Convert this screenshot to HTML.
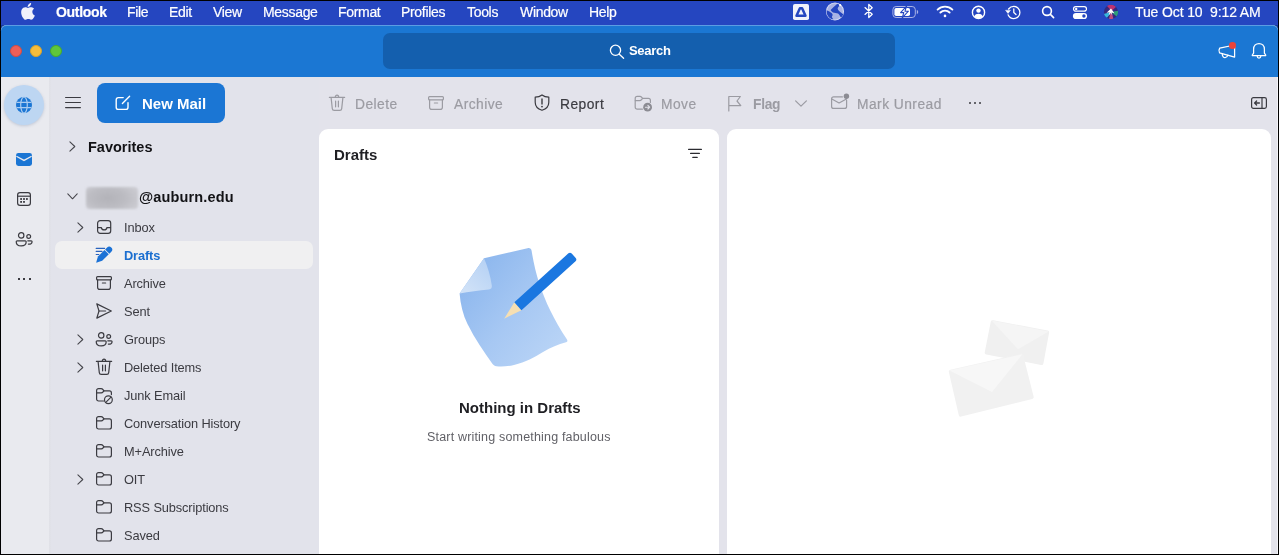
<!DOCTYPE html>
<html>
<head>
<meta charset="utf-8">
<style>
*{box-sizing:border-box;margin:0;padding:0}
html,body{width:1279px;height:555px;overflow:hidden;background:#000}
body{font-family:"Liberation Sans",sans-serif;position:relative}
.abs{position:absolute}
svg{position:absolute;overflow:visible}
#menubar{left:1px;top:1px;width:1277px;height:32px;background:#2546c0;border-bottom:8px solid #143a98}
.mi{position:absolute;top:1px;height:23px;line-height:23px;color:#fff;font-size:14px;letter-spacing:-0.32px;white-space:nowrap;-webkit-text-stroke:0.2px #fff;will-change:transform}
#win{left:1px;top:25px;width:1277px;height:529px;background:#e3e3eb;border-radius:5.5px 5.5px 0 0}
#title{left:1px;top:25px;width:1277px;height:52px;background:#1b77d3;border-radius:5.5px 5.5px 0 0;border-top:1px solid #5b9de3}
#search{left:383px;top:33px;width:512px;height:36px;background:#145fae;border-radius:7px}
#rail{left:1px;top:77px;width:48px;height:477px;background:#e9eaef}
#side{left:49px;top:77px;width:270px;height:477px;background:#e2e3eb}
#list{left:319px;top:129px;width:400px;height:425px;background:#fff;border-radius:9px 9px 0 0}
#read{left:727px;top:129px;width:544px;height:425px;background:#fff;border-radius:9px 9px 0 0}
.ft{position:absolute;left:124px;line-height:20px;font-size:12.8px;letter-spacing:-0.12px;color:#3b3b41;white-space:nowrap;will-change:transform}
.tb{position:absolute;top:95px;margin-left:-1px;font-size:13.8px;letter-spacing:0.46px;line-height:20px;white-space:nowrap;color:#9b9ba2;-webkit-text-stroke:0.2px;will-change:transform}
.t{position:absolute;white-space:nowrap;will-change:transform}
</style>
</head>
<body>
<!-- MENUBAR -->
<div id="menubar" class="abs"></div>
<span class="mi" id="m_outlook" style="left:56px;font-weight:bold">Outlook</span>
<span class="mi" id="m_file" style="left:127px">File</span>
<span class="mi" id="m_edit" style="left:169px">Edit</span>
<span class="mi" id="m_view" style="left:213px">View</span>
<span class="mi" id="m_message" style="left:263px">Message</span>
<span class="mi" id="m_format" style="left:338px">Format</span>
<span class="mi" id="m_profiles" style="left:401px">Profiles</span>
<span class="mi" id="m_tools" style="left:467px">Tools</span>
<span class="mi" id="m_window" style="left:520px">Window</span>
<span class="mi" id="m_help" style="left:589px">Help</span>
<span class="mi" id="m_date" style="left:1135px;letter-spacing:-0.12px">Tue Oct 10&nbsp; 9:12 AM</span>
<!-- MENUBAR-ICONS -->
<svg style="left:20.6px;top:3px" width="14" height="17" viewBox="0 0 14 17"><path fill="#f0f1fb" d="M11.3 9.0 C11.3 6.9 13.0 5.9 13.1 5.8 C12.1 4.4 10.6 4.2 10.1 4.2 C8.8 4.1 7.6 4.9 7.0 4.9 C6.3 4.9 5.3 4.2 4.3 4.2 C2.9 4.2 1.6 5.0 0.9 6.2 C-0.6 8.8 0.5 12.6 2.0 14.7 C2.7 15.7 3.5 16.8 4.6 16.8 C5.7 16.8 6.1 16.1 7.4 16.1 C8.7 16.1 9.0 16.8 10.1 16.8 C11.3 16.8 12.0 15.8 12.7 14.8 C13.5 13.6 13.8 12.5 13.8 12.4 C13.8 12.4 11.3 11.5 11.3 9.0 Z M9.2 2.8 C9.8 2.1 10.2 1.1 10.1 0.1 C9.2 0.1 8.2 0.7 7.6 1.4 C7.0 2.0 6.5 3.0 6.7 4.0 C7.6 4.1 8.6 3.5 9.2 2.8 Z"/></svg>
<svg style="left:793px;top:4px" width="16" height="16" viewBox="0 0 16 16"><rect width="16" height="16" rx="1.8" fill="#f1f2fb"/><path d="M6.9 4.3 H9.1 L12.5 11.7 H3.5 Z" fill="none" stroke="#2546c0" stroke-width="2.5" stroke-linejoin="round"/></svg>
<svg style="left:825px;top:2px" width="20" height="19" viewBox="0 0 20 19"><circle cx="10" cy="9.45" r="8.5" fill="#a9b3e4" stroke="#d3d8f3" stroke-width="1.1"/><path d="M12.8 1.8 L15.0 3.4 C13.4 4.6 12.6 5.6 12.7 6.6 C12.8 8.2 14.6 9.8 16.2 10.8 L18.3 12.2 C17.8 13.6 17.0 14.6 15.8 15.6 C15.0 13.8 14.2 12.4 13.0 11.6 C11.6 10.8 9.6 11.0 8.0 10.4 C6.8 9.8 6.0 9.0 5.6 8.0 C7.6 6.0 9.8 3.8 11.4 2.4 Z" fill="#2546c0"/><path d="M1.6 8.2 C2.8 8.6 3.8 9.0 4.8 9.8 C6.0 10.8 7.4 11.4 7.6 12.4 C7.8 13.4 6.8 14.2 7.0 15.2 C7.2 16.0 8.0 16.6 8.6 17.6 C4.8 17.0 1.6 13.6 1.6 9.45 Z" fill="#2546c0"/><circle cx="15.1" cy="3.1" r="1.05" fill="#fff"/></svg>
<svg style="left:864px;top:3px" width="10" height="16" viewBox="0 0 10 16" fill="none" stroke="#fff" stroke-width="1.3" stroke-linejoin="round" stroke-linecap="round"><path d="M1.0 4.6 L8.2 11.2 L4.8 14.6 V1.4 L8.2 4.8 L1.0 11.4"/></svg>
<svg style="left:892px;top:6px" width="28" height="12" viewBox="0 0 28 12"><rect x="0.9" y="0.5" width="22.4" height="11" rx="3.2" fill="none" stroke="#aab3e6" stroke-width="1"/><rect x="2.4" y="2" width="15.6" height="8" rx="1.8" fill="#fff"/><path d="M24.8 4.0 C25.8 4.4 26.2 5.2 26.2 6.0 C26.2 6.8 25.8 7.6 24.8 8.0 Z" fill="#aab3e6"/><path d="M14.6 0.2 L8.6 6.6 H11.8 L10.2 11.8 L16.4 5.2 H13.0 Z" fill="#fff" stroke="#2546c0" stroke-width="1.1" stroke-linejoin="round"/></svg>
<svg style="left:936px;top:5px" width="18" height="13" viewBox="0 0 18 13" fill="none" stroke="#fff" stroke-width="1.9" stroke-linecap="round"><path d="M1.6 4.6 C5.8 0.6 12.2 0.6 16.4 4.6"/><path d="M4.4 7.5 C7.0 5.0 11.0 5.0 13.6 7.5"/><path d="M9 10.9 L9 10.9" stroke-width="2.6"/></svg>
<svg style="left:971px;top:5px" width="15" height="15" viewBox="0 0 15 15"><circle cx="7.5" cy="7.4" r="6.1" fill="none" stroke="#fff" stroke-width="1.4"/><circle cx="7.5" cy="5.6" r="2.2" fill="#fff"/><path d="M3.2 11.6 C4.0 9.4 5.6 8.8 7.5 8.8 C9.4 8.8 11.0 9.4 11.8 11.6 C10.6 12.8 9.2 13.4 7.5 13.4 C5.8 13.4 4.4 12.8 3.2 11.6 Z" fill="#fff"/></svg>
<svg style="left:1005px;top:5px" width="16" height="15" viewBox="0 0 16 15" fill="none" stroke="#fff" stroke-width="1.3" stroke-linecap="round" stroke-linejoin="round"><path d="M3.6 4.0 C4.8 2.4 6.6 1.4 8.8 1.4 C12.2 1.4 14.9 4.1 14.9 7.5 C14.9 10.9 12.2 13.6 8.8 13.6 C6.2 13.6 4.0 12.0 3.1 9.8"/><path d="M0.8 5.6 L3.0 8.4 L5.2 5.6 Z" fill="#fff" stroke-width="0.6"/><path d="M8.8 4.0 V7.6 L11.0 9.6"/></svg>
<svg style="left:1041px;top:5px" width="14" height="14" viewBox="0 0 14 14" fill="none" stroke="#fff" stroke-width="1.6" stroke-linecap="round"><circle cx="6.0" cy="6.0" r="4.4"/><path d="M9.4 9.4 L12.6 12.6"/></svg>
<svg style="left:1072px;top:5px" width="16" height="15" viewBox="0 0 16 15"><rect x="1.5" y="1.6" width="13" height="4.6" rx="2.3" fill="none" stroke="#fff" stroke-width="1.2"/><circle cx="4.2" cy="3.9" r="1.2" fill="#fff"/><rect x="0.9" y="7.9" width="14.2" height="6.2" rx="3.1" fill="#fff"/><circle cx="11.9" cy="11" r="1.7" fill="#2546c0"/></svg>
<svg style="left:1103px;top:3.7px" width="16" height="16" viewBox="0 0 16 16"><defs><radialGradient id="sg" cx="0.5" cy="0.5" r="0.5"><stop offset="0" stop-color="#3a2c8c"/><stop offset="0.8" stop-color="#34287c"/><stop offset="1" stop-color="#2b2d86"/></radialGradient><clipPath id="sc"><circle cx="8" cy="8" r="7.2"/></clipPath></defs><circle cx="8" cy="8" r="7.2" fill="url(#sg)"/><g clip-path="url(#sc)"><g style="filter:blur(0.7px)"><path d="M3 1 C6 0 11 0 13.5 2.5 C12 4 10 5.5 8.2 7.2 C7 5 5 3 3 1 Z" fill="#d3346f" opacity="0.85"/><path d="M0.5 10 C3 9.5 6 8.8 8 8 C6.5 10.5 5 12.8 3.4 14.6 C2 13.6 1 12 0.5 10 Z" fill="#36c7e8" opacity="0.9"/><path d="M15.6 6.5 C15.8 9 15 11 13.6 12.6 C12 11 10 9.4 8.2 8 C10.6 7.6 13.4 7 15.6 6.5 Z" fill="#2db37a" opacity="0.85"/><path d="M8 7.8 C9 10 10 12.6 10.6 15.4 C9 15.8 7.4 15.6 6 15 C6.6 12.4 7.2 10 8 7.8 Z" fill="#e2557f" opacity="0.8"/></g><path d="M8 4.6 L11.4 9.2 L8.6 8.6 L9.4 11.6 L7.8 9 L5.6 11.4 L6.6 8.2 L3.6 8.8 Z" fill="#fff"/></g></svg>
<!-- WINDOW -->
<div id="win" class="abs"></div>
<div id="title" class="abs"></div>
<div id="search" class="abs"></div>
<!-- TITLE-ITEMS -->
<div class="abs" style="left:10px;top:45px;width:12px;height:12px;border-radius:50%;background:#ed5f57;border:0.5px solid #d44a42"></div>
<div class="abs" style="left:30px;top:45px;width:12px;height:12px;border-radius:50%;background:#f6bd3b;border:0.5px solid #dba32b"></div>
<div class="abs" style="left:50px;top:45px;width:12px;height:12px;border-radius:50%;background:#5fc63b;border:0.5px solid #48a92c"></div>
<svg style="left:609px;top:43px" width="16" height="16" viewBox="0 0 16 16" fill="none" stroke="#fff" stroke-width="1.3" stroke-linecap="round"><circle cx="6.5" cy="7.3" r="5.1"/><path d="M10.3 11.2 L14.6 15.2"/></svg>
<span class="t" id="t_search" style="left:629px;top:41px;line-height:20px;font-size:13px;letter-spacing:-0.3px;font-weight:bold;color:#fff">Search</span>
<svg style="left:1217px;top:42px" width="20" height="18" viewBox="0 0 20 18" fill="none" stroke="#fff" stroke-width="1.25" stroke-linejoin="round" stroke-linecap="round"><path d="M2.7 6.2 L17.6 3.0 V15.1 L2.5 10.8 C1.7 9.4 1.8 7.6 2.7 6.2 Z"/><path d="M5.2 11.8 C5.3 14.6 6.8 15.8 8.1 15.7 C9.4 15.6 10.4 14.7 10.8 13.1"/></svg>
<div class="abs" style="left:1229.1px;top:42.4px;width:6.6px;height:6.6px;border-radius:50%;background:#ea443a"></div>
<svg style="left:1250px;top:41.5px" width="18" height="18" viewBox="0 0 18 18" fill="none" stroke="#fff" stroke-width="1.25" stroke-linejoin="round" stroke-linecap="round"><path d="M3.6 11.2 V7.2 C3.6 3.7 6.0 1.5 9.0 1.5 C12.0 1.5 14.4 3.7 14.4 7.2 V11.2 L15.7 13.0 C15.9 13.4 15.7 13.7 15.3 13.7 H2.7 C2.3 13.7 2.1 13.4 2.3 13.0 Z"/><path d="M7.2 14.2 C7.4 16.6 10.6 16.6 10.8 14.2"/></svg>
<div id="rail" class="abs"></div>
<div id="side" class="abs"></div>
<div id="list" class="abs"></div>
<div id="read" class="abs"></div>
<!-- RAIL-ITEMS -->
<div class="abs" style="left:1277px;top:77px;width:1px;height:477px;background:#f3f3f7"></div>
<div class="abs" style="left:49px;top:77px;width:2px;height:477px;background:linear-gradient(90deg,#e0e1e7,#e1e2e9)"></div>
<div class="abs" style="left:4px;top:85px;width:40px;height:40px;border-radius:50%;background:#bdd6f2;box-shadow:0 1px 3px rgba(90,110,150,0.28)"></div>
<svg style="left:16px;top:97px" width="16" height="16" viewBox="0 0 16 16"><circle cx="8" cy="8" r="8" fill="#1b76d4"/><g fill="none" stroke="#a9cbf0" stroke-width="1.2"><ellipse cx="8" cy="8" rx="3.3" ry="8"/><path d="M0.5 5.3 H15.5 M0.5 10.7 H15.5"/></g></svg>
<svg style="left:16px;top:153px" width="16" height="13" viewBox="0 0 16 13"><rect x="0" y="0" width="16" height="13" rx="2.4" fill="#1b76d4"/><path d="M0.4 3.2 L8 7.4 L15.6 3.2" fill="none" stroke="#e9eaef" stroke-width="1.3"/></svg>
<svg style="left:17px;top:192px" width="14" height="14" viewBox="0 0 14 14" fill="none" stroke="#3b3b41" stroke-width="1.2"><rect x="0.6" y="0.6" width="12.8" height="12.8" rx="2.4"/><path d="M0.6 4.2 H13.4"/><g fill="#3b3b41" stroke="none"><rect x="3.2" y="6.1" width="1.8" height="1.8"/><rect x="6.1" y="6.1" width="1.8" height="1.8"/><rect x="9.0" y="6.1" width="1.8" height="1.8"/><rect x="3.2" y="9.0" width="1.8" height="1.8"/><rect x="6.1" y="9.0" width="1.8" height="1.8"/></g></svg>
<svg style="left:15px;top:232px" width="18" height="15" viewBox="0 0 18 15" fill="none" stroke="#3b3b41" stroke-width="1.2" stroke-linecap="round"><circle cx="6.2" cy="3.4" r="2.7"/><path d="M2.2 8.8 H10.2 C10.8 8.8 11.2 9.2 11.2 9.8 C11.2 12.6 9.0 13.9 6.2 13.9 C3.4 13.9 1.2 12.6 1.2 9.8 C1.2 9.2 1.6 8.8 2.2 8.8 Z"/><circle cx="13.7" cy="4.5" r="1.9"/><path d="M12.8 8.8 H16.2 C16.8 8.8 17.1 9.2 17.1 9.8 C17.0 11.6 15.6 12.3 13.4 12.1"/></svg>
<div class="abs" style="left:17.5px;top:278px;width:2.2px;height:2.2px;background:#3b3b41"></div>
<div class="abs" style="left:23px;top:278px;width:2.2px;height:2.2px;background:#3b3b41"></div>
<div class="abs" style="left:28.5px;top:278px;width:2.2px;height:2.2px;background:#3b3b41"></div>
<!-- TOOLBAR-ITEMS -->
<svg style="left:65px;top:96px" width="16" height="13" viewBox="0 0 16 13" stroke="#3b3b41" stroke-width="1.2" stroke-linecap="round"><path d="M0.6 1.5 H15.4 M0.6 6.5 H15.4 M0.6 11.6 H15.4"/></svg>
<div class="abs" style="left:97px;top:83px;width:128px;height:40px;border-radius:8px;background:#1b76d4"></div>
<svg style="left:115px;top:95px" width="16" height="16" viewBox="0 0 16 16" fill="none" stroke="#fff" stroke-width="1.4" stroke-linecap="round" stroke-linejoin="round"><path d="M8.2 2.6 H3.4 C2.1 2.6 1.2 3.5 1.2 4.8 V12.2 C1.2 13.5 2.1 14.4 3.4 14.4 H10.8 C12.1 14.4 13.0 13.5 13.0 12.2 V7.6"/><path d="M7.4 8.6 L14.6 1.2"/></svg>
<span class="t" id="t_newmail" style="left:141.5px;top:94px;line-height:20px;font-size:15px;font-weight:bold;color:#fff">New Mail</span>
<svg style="left:329px;top:94px" width="16" height="17" viewBox="0 0 16 17" fill="none" stroke="#9b9ba2" stroke-width="1.2" stroke-linecap="round" stroke-linejoin="round"><path d="M0.4 3.4 H15.6"/><path d="M6.3 3.2 C6.3 0.4 9.7 0.4 9.7 3.2"/><path d="M2.1 3.6 L3.3 14.6 C3.4 15.8 4.1 16.4 5.2 16.4 H10.8 C11.9 16.4 12.6 15.8 12.7 14.6 L13.9 3.6"/><path d="M6.6 7.2 V12.8 M9.4 7.2 V12.8"/></svg>
<span class="tb" id="t_delete" style="left:356px">Delete</span>
<svg style="left:428px;top:96px" width="16" height="14" viewBox="0 0 16 14" fill="none" stroke="#9b9ba2" stroke-width="1.2" stroke-linecap="round" stroke-linejoin="round"><rect x="0.6" y="0.6" width="14.8" height="3.2" rx="0.9"/><path d="M1.6 3.9 V11.2 C1.6 12.6 2.4 13.4 3.8 13.4 H12.2 C13.6 13.4 14.4 12.6 14.4 11.2 V3.9"/><path d="M6.4 7.0 H9.6"/></svg>
<span class="tb" id="t_archive" style="left:455px">Archive</span>
<svg style="left:534px;top:94px" width="16" height="17" viewBox="0 0 16 17" fill="none" stroke="#3b3b41" stroke-width="1.2" stroke-linecap="round" stroke-linejoin="round"><path d="M8 0.9 C6.0 2.4 3.6 3.0 1.2 3.1 V8.2 C1.2 12.2 4.0 15.0 8 16.3 C12.0 15.0 14.8 12.2 14.8 8.2 V3.1 C12.4 3.0 10.0 2.4 8 0.9 Z"/><path d="M8 5.0 V10.0" stroke-width="1.4"/><circle cx="8" cy="12.6" r="0.9" fill="#3b3b41" stroke="none"/></svg>
<span class="tb" id="t_report" style="left:560.5px;color:#3b3b41">Report</span>
<svg style="left:634px;top:95px" width="19" height="18" viewBox="0 0 19 18" fill="none" stroke="#9b9ba2" stroke-width="1.2" stroke-linecap="round" stroke-linejoin="round"><path d="M8.4 14.2 H3.2 C2.0 14.2 1.2 13.4 1.2 12.2 V3.4 C1.2 2.2 2.0 1.4 3.2 1.4 H6.0 C6.8 1.4 7.2 1.7 7.7 2.3 L8.6 3.4 H14.4 C15.6 3.4 16.4 4.2 16.4 5.4 V7.4"/><path d="M1.3 5.6 H5.6 C6.6 5.6 7.0 5.3 7.6 4.6 L8.6 3.4"/><circle cx="13.6" cy="12.2" r="4.4" fill="#8c8c93" stroke="none"/><path d="M11.4 12.2 H15.6 M13.9 10.4 L15.7 12.2 L13.9 14.0" stroke="#e3e3eb" stroke-width="1.1"/></svg>
<span class="tb" id="t_move" style="left:661.5px">Move</span>
<svg style="left:727px;top:95px" width="15" height="17" viewBox="0 0 15 17" fill="none" stroke="#9b9ba2" stroke-width="1.2" stroke-linecap="round" stroke-linejoin="round"><path d="M1.8 16.0 V1.5 H13.4 L10.0 6.0 L13.8 10.6 H1.8"/></svg>
<span class="tb" id="t_flag" style="left:753.5px;font-weight:bold;letter-spacing:-0.3px;-webkit-text-stroke:0">Flag</span>
<svg style="left:795px;top:100px" width="12" height="7" viewBox="0 0 12 7" fill="none" stroke="#9b9ba2" stroke-width="1.2" stroke-linecap="round" stroke-linejoin="round"><path d="M0.6 0.8 L6 6.2 L11.4 0.8"/></svg>
<svg style="left:831px;top:93px" width="19" height="17" viewBox="0 0 19 17" fill="none" stroke="#9b9ba2" stroke-width="1.2" stroke-linecap="round" stroke-linejoin="round"><path d="M11.4 3.9 H2.6 C1.4 3.9 0.6 4.7 0.6 5.9 V13.4 C0.6 14.6 1.4 15.4 2.6 15.4 H13.6 C14.8 15.4 15.6 14.6 15.6 13.4 V7.2"/><path d="M0.8 6.0 L8.1 10.0 L15.4 6.0"/><circle cx="15.4" cy="3.2" r="2.7" fill="#8c8c93" stroke="none"/></svg>
<span class="tb" id="t_markunread" style="left:857.5px">Mark Unread</span>
<div class="abs" style="left:968.5px;top:101.5px;width:2.4px;height:2.4px;border-radius:50%;background:#3b3b41"></div>
<div class="abs" style="left:973.5px;top:101.5px;width:2.4px;height:2.4px;border-radius:50%;background:#3b3b41"></div>
<div class="abs" style="left:978.5px;top:101.5px;width:2.4px;height:2.4px;border-radius:50%;background:#3b3b41"></div>
<svg style="left:1251px;top:97px" width="16" height="12" viewBox="0 0 16 12" fill="none" stroke="#3b3b41" stroke-width="1.2" stroke-linecap="round" stroke-linejoin="round"><rect x="0.6" y="0.6" width="14.8" height="10.8" rx="1.8"/><path d="M11.0 0.8 V11.2"/><path d="M3.8 6 H8.4 M5.6 4.0 L3.6 6 L5.6 8.0" stroke-width="1.3"/></svg>
<!-- SIDE-ITEMS -->
<svg style="left:69px;top:141px" width="7" height="11" viewBox="0 0 7 11" fill="none" stroke="#45454b" stroke-width="1.05" stroke-linecap="round" stroke-linejoin="round"><path d="M0.9 0.8 L5.8 5.5 L0.9 10.2"/></svg>
<span class="t" id="s_fav" style="left:88px;top:137px;line-height:20px;font-size:14.5px;font-weight:bold;color:#121215">Favorites</span>
<svg style="left:67px;top:193px" width="11" height="7" viewBox="0 0 11 7" fill="none" stroke="#45454b" stroke-width="1.05" stroke-linecap="round" stroke-linejoin="round"><path d="M0.8 0.9 L5.5 5.8 L10.2 0.9"/></svg>
<div class="abs" style="left:86px;top:186.5px;width:52px;height:22px;border-radius:4px;background:radial-gradient(ellipse 60% 75% at 42% 50%,#b3b3b9 0%,#bcbcc2 55%,#cacad0 100%);filter:blur(1.3px)"></div>
<span class="t" id="s_acct" style="left:138.5px;top:187px;line-height:20px;font-size:14.5px;letter-spacing:0.15px;font-weight:bold;color:#121215">@auburn.edu</span>
<div class="abs" style="left:55px;top:241px;width:258px;height:28px;border-radius:7px;background:#f0f0f1"></div>
<span class="ft" id="s_inbox" style="top:218px">Inbox</span>
<span class="ft" id="s_archive" style="top:274px">Archive</span>
<span class="ft" id="s_sent" style="top:302px">Sent</span>
<span class="ft" id="s_groups" style="top:330px">Groups</span>
<span class="ft" id="s_deleted" style="top:358px">Deleted Items</span>
<span class="ft" id="s_junk" style="top:386px">Junk Email</span>
<span class="ft" id="s_conversation" style="top:414px">Conversation History</span>
<span class="ft" id="s_marchive" style="top:442px">M+Archive</span>
<span class="ft" id="s_oit" style="top:470px">OIT</span>
<span class="ft" id="s_rss" style="top:498px">RSS Subscriptions</span>
<span class="ft" id="s_saved" style="top:526px">Saved</span>
<span class="ft" id="s_drafts" style="top:246px;font-weight:bold;color:#1b6fd0">Drafts</span>
<svg style="left:77px;top:222px" width="7" height="11" viewBox="0 0 7 11" fill="none" stroke="#45454b" stroke-width="1.05" stroke-linecap="round" stroke-linejoin="round"><path d="M0.9 0.8 L5.8 5.5 L0.9 10.2"/></svg>
<svg style="left:77px;top:334px" width="7" height="11" viewBox="0 0 7 11" fill="none" stroke="#45454b" stroke-width="1.05" stroke-linecap="round" stroke-linejoin="round"><path d="M0.9 0.8 L5.8 5.5 L0.9 10.2"/></svg>
<svg style="left:77px;top:362px" width="7" height="11" viewBox="0 0 7 11" fill="none" stroke="#45454b" stroke-width="1.05" stroke-linecap="round" stroke-linejoin="round"><path d="M0.9 0.8 L5.8 5.5 L0.9 10.2"/></svg>
<svg style="left:77px;top:474px" width="7" height="11" viewBox="0 0 7 11" fill="none" stroke="#45454b" stroke-width="1.05" stroke-linecap="round" stroke-linejoin="round"><path d="M0.9 0.8 L5.8 5.5 L0.9 10.2"/></svg>
<svg style="left:96.5px;top:220px" width="15" height="14" viewBox="0 0 15 14" fill="none" stroke="#3b3b41" stroke-width="1.2" stroke-linecap="round" stroke-linejoin="round"><rect x="0.6" y="0.6" width="13.1" height="12.8" rx="2.6"/><path d="M0.8 7.6 H4.4 C4.6 10.6 9.7 10.6 9.9 7.6 H13.5"/></svg>
<svg style="left:95px;top:246px" width="18" height="17" viewBox="0 0 18 17"><g fill="none" stroke="#2a63bd" stroke-width="1.15" stroke-linecap="round"><path d="M1.2 2.4 H9.6 M1.2 5.4 H7.0 M1.2 8.5 H3.8"/></g><g transform="translate(1.1 16.7) rotate(-45)" fill="#1b72d6"><path d="M0 0 L5.6 -3 H14.9 V3 H5.6 Z"/><path d="M15.8 -3 H18.5 a3 3 0 0 1 0 6 H15.8 Z"/></g></svg>
<svg style="left:96px;top:276px" width="16" height="14" viewBox="0 0 16 14" fill="none" stroke="#3b3b41" stroke-width="1.2" stroke-linecap="round" stroke-linejoin="round"><rect x="0.6" y="0.6" width="14.8" height="3.2" rx="0.9"/><path d="M1.6 3.9 V11.2 C1.6 12.6 2.4 13.4 3.8 13.4 H12.2 C13.6 13.4 14.4 12.6 14.4 11.2 V3.9"/><path d="M6.4 7.0 H9.6"/></svg>
<svg style="left:96px;top:303px" width="16" height="16" viewBox="0 0 16 16" fill="none" stroke="#3b3b41" stroke-width="1.2" stroke-linecap="round" stroke-linejoin="round"><path d="M0.8 0.9 L15.3 8.0 L0.8 15.1 L3.0 8.0 Z"/><path d="M3.0 8.0 H9.6"/></svg>
<svg style="left:95px;top:332px" width="18" height="15" viewBox="0 0 18 15" fill="none" stroke="#3b3b41" stroke-width="1.2" stroke-linecap="round"><circle cx="6.2" cy="3.4" r="2.7"/><path d="M2.2 8.8 H10.2 C10.8 8.8 11.2 9.2 11.2 9.8 C11.2 12.6 9.0 13.9 6.2 13.9 C3.4 13.9 1.2 12.6 1.2 9.8 C1.2 9.2 1.6 8.8 2.2 8.8 Z"/><circle cx="13.7" cy="4.5" r="1.9"/><path d="M12.8 8.8 H16.2 C16.8 8.8 17.1 9.2 17.1 9.8 C17.0 11.6 15.6 12.3 13.4 12.1"/></svg>
<svg style="left:96px;top:358px" width="16" height="17" viewBox="0 0 16 17" fill="none" stroke="#3b3b41" stroke-width="1.2" stroke-linecap="round" stroke-linejoin="round"><path d="M0.4 3.4 H15.6"/><path d="M6.3 3.2 C6.3 0.4 9.7 0.4 9.7 3.2"/><path d="M2.1 3.6 L3.3 14.6 C3.4 15.8 4.1 16.4 5.2 16.4 H10.8 C11.9 16.4 12.6 15.8 12.7 14.6 L13.9 3.6"/><path d="M6.6 7.2 V12.8 M9.4 7.2 V12.8"/></svg>
<svg style="left:96px;top:388px" width="18" height="17" viewBox="0 0 18 17" fill="none" stroke="#3b3b41" stroke-width="1.2" stroke-linecap="round" stroke-linejoin="round"><path d="M7.6 13.0 H2.6 C1.4 13.0 0.6 12.2 0.6 11.0 V2.6 C0.6 1.4 1.4 0.6 2.6 0.6 H5.0 C6.0 0.6 6.5 0.9 7.0 1.6 L7.9 2.9 H13.4 C14.6 2.9 15.4 3.7 15.4 4.9 V6.6"/><path d="M0.8 4.9 H5.2 C6.2 4.9 6.6 4.6 7.1 3.9 L7.9 2.9"/><circle cx="12.4" cy="11.8" r="3.9"/><path d="M9.8 14.4 L15.0 9.2"/></svg>
<svg style="left:96px;top:416px" width="16" height="14" viewBox="0 0 16 14" fill="none" stroke="#3b3b41" stroke-width="1.2" stroke-linecap="round" stroke-linejoin="round"><path d="M0.6 11.0 V2.6 C0.6 1.4 1.4 0.6 2.6 0.6 H5.0 C6.0 0.6 6.5 0.9 7.0 1.6 L7.9 2.9 H13.4 C14.6 2.9 15.4 3.7 15.4 4.9 V11.0 C15.4 12.2 14.6 13.0 13.4 13.0 H2.6 C1.4 13.0 0.6 12.2 0.6 11.0 Z"/><path d="M0.8 4.9 H5.2 C6.2 4.9 6.6 4.6 7.1 3.9 L7.9 2.9"/></svg>
<svg style="left:96px;top:444px" width="16" height="14" viewBox="0 0 16 14" fill="none" stroke="#3b3b41" stroke-width="1.2" stroke-linecap="round" stroke-linejoin="round"><path d="M0.6 11.0 V2.6 C0.6 1.4 1.4 0.6 2.6 0.6 H5.0 C6.0 0.6 6.5 0.9 7.0 1.6 L7.9 2.9 H13.4 C14.6 2.9 15.4 3.7 15.4 4.9 V11.0 C15.4 12.2 14.6 13.0 13.4 13.0 H2.6 C1.4 13.0 0.6 12.2 0.6 11.0 Z"/><path d="M0.8 4.9 H5.2 C6.2 4.9 6.6 4.6 7.1 3.9 L7.9 2.9"/></svg>
<svg style="left:96px;top:472px" width="16" height="14" viewBox="0 0 16 14" fill="none" stroke="#3b3b41" stroke-width="1.2" stroke-linecap="round" stroke-linejoin="round"><path d="M0.6 11.0 V2.6 C0.6 1.4 1.4 0.6 2.6 0.6 H5.0 C6.0 0.6 6.5 0.9 7.0 1.6 L7.9 2.9 H13.4 C14.6 2.9 15.4 3.7 15.4 4.9 V11.0 C15.4 12.2 14.6 13.0 13.4 13.0 H2.6 C1.4 13.0 0.6 12.2 0.6 11.0 Z"/><path d="M0.8 4.9 H5.2 C6.2 4.9 6.6 4.6 7.1 3.9 L7.9 2.9"/></svg>
<svg style="left:96px;top:500px" width="16" height="14" viewBox="0 0 16 14" fill="none" stroke="#3b3b41" stroke-width="1.2" stroke-linecap="round" stroke-linejoin="round"><path d="M0.6 11.0 V2.6 C0.6 1.4 1.4 0.6 2.6 0.6 H5.0 C6.0 0.6 6.5 0.9 7.0 1.6 L7.9 2.9 H13.4 C14.6 2.9 15.4 3.7 15.4 4.9 V11.0 C15.4 12.2 14.6 13.0 13.4 13.0 H2.6 C1.4 13.0 0.6 12.2 0.6 11.0 Z"/><path d="M0.8 4.9 H5.2 C6.2 4.9 6.6 4.6 7.1 3.9 L7.9 2.9"/></svg>
<svg style="left:96px;top:528px" width="16" height="14" viewBox="0 0 16 14" fill="none" stroke="#3b3b41" stroke-width="1.2" stroke-linecap="round" stroke-linejoin="round"><path d="M0.6 11.0 V2.6 C0.6 1.4 1.4 0.6 2.6 0.6 H5.0 C6.0 0.6 6.5 0.9 7.0 1.6 L7.9 2.9 H13.4 C14.6 2.9 15.4 3.7 15.4 4.9 V11.0 C15.4 12.2 14.6 13.0 13.4 13.0 H2.6 C1.4 13.0 0.6 12.2 0.6 11.0 Z"/><path d="M0.8 4.9 H5.2 C6.2 4.9 6.6 4.6 7.1 3.9 L7.9 2.9"/></svg>
<!-- LIST-ITEMS -->
<span class="t" id="l_drafts" style="left:333.5px;top:145px;line-height:20px;font-size:15px;font-weight:bold;color:#1f1f23">Drafts</span>
<svg style="left:688px;top:148px" width="14" height="11" viewBox="0 0 14 11" stroke="#2b2b30" stroke-width="1.2" stroke-linecap="round"><path d="M0.6 1.4 H13.4 M2.6 5.4 H11.4 M4.8 9.4 H9.2"/></svg>
<svg style="left:450px;top:240px" width="140" height="140" viewBox="450 240 140 140">
<defs>
<linearGradient id="pg" x1="462" y1="270" x2="560" y2="350" gradientUnits="userSpaceOnUse"><stop offset="0" stop-color="#8ab5ed"/><stop offset="0.55" stop-color="#a7c8f3"/><stop offset="1" stop-color="#b9d4f6"/></linearGradient>
<linearGradient id="fg" x1="466" y1="290" x2="490" y2="262" gradientUnits="userSpaceOnUse"><stop offset="0" stop-color="#cfe1f7"/><stop offset="1" stop-color="#b5d1f4"/></linearGradient>
</defs>
<path d="M484 258.2 L527.5 248.2 C529.8 247.7 531.2 248.6 531.6 250.8 C533.4 262 535.6 272 539.5 284 C545 301 554 320 567 339.5 C567.8 340.8 567.4 341.8 566 342.2 C558 344.5 551 347.2 543 352 C534 357.5 526 362 514 365 C507 366.6 501 366.9 496.5 366.3 C494.5 366 493.2 365 492.2 363.5 C484 352 475 339 467.5 324 C463 315 460.4 304 459.6 293.5 Z" fill="url(#pg)"/>
<path d="M484 258.2 C487.5 266 490.5 276 491.8 285.5 C492.1 287.9 491.2 289.2 488.8 289.5 C479 290.6 469 291.6 459.6 293.5 Z" fill="url(#fg)"/>
<g transform="translate(504.2 318.7) rotate(-42.2)">
<path d="M0 0 L18.5 -5.3 L18.5 5.3 Z" fill="#f6dfb2"/>
<path d="M18.5 -5.3 H91.5 C92.9 -5.3 93.8 -4.4 93.8 -3 V3 C93.8 4.4 92.9 5.3 91.5 5.3 H18.5 Z" fill="#1b77e0"/>
</g>
</svg>
<span class="t" id="l_nothing" style="left:458.5px;top:398px;line-height:20px;font-size:15px;font-weight:bold;color:#1f1f23">Nothing in Drafts</span>
<span class="t" id="l_start" style="left:426.5px;top:427px;line-height:20px;font-size:12.5px;letter-spacing:0.18px;color:#616167">Start writing something fabulous</span>
<!-- READ-ITEMS -->
<svg style="left:940px;top:310px" width="120" height="115" viewBox="940 310 120 115">
<path d="M993.2 320.2 L1047.6 330.5 C1048.8 330.8 1049.4 331.6 1049.1 332.8 L1043.4 363.4 C1043.1 364.6 1042.3 365.1 1041.1 364.9 L986.2 354.4 C985 354.1 984.5 353.3 984.8 352.1 L990.8 321.6 C991.1 320.4 992 320 993.2 320.2 Z" fill="#f0f0f0"/>
<path d="M991.6 320.6 L1048.6 331.4 L1018 349.2 Z" fill="#f5f5f5"/>
<path d="M950.4 369.8 L1020.8 353.8 C1022 353.5 1022.9 354 1023.2 355.2 L1033.6 396.6 C1033.9 397.8 1033.4 398.7 1032.2 399 L961.2 416.6 C960 416.9 959.1 416.4 958.8 415.2 L948.9 372.2 C948.6 371 949.2 370.1 950.4 369.8 Z" fill="#f1f1f1"/>
<path d="M949.4 370.6 L1022.4 354.2 L992 392 Z" fill="#f7f7f7"/>
</svg>
</body>
</html>
